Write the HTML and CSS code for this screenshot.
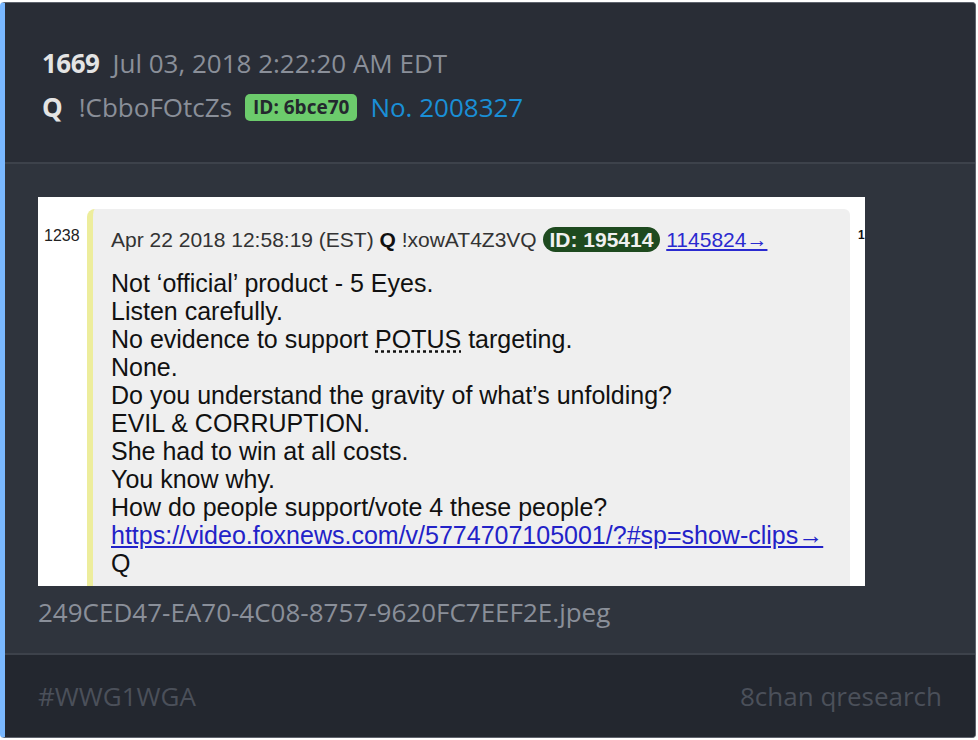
FILE: index.html
```html
<!DOCTYPE html>
<html lang="en">

<head>
    <meta charset="UTF-8">
    <title>Q Drop 1669</title>
    <link rel="stylesheet" href="styles.css">
</head>

<body>
    <div class="card">
        <div class="card-header">
            <div class="meta-line">
                <span class="post-num">1669</span>
                <span class="post-date">Jul 03, 2018 2:22:20 AM EDT</span>
            </div>
            <div class="meta-line">
                <span class="author">Q</span>
                <span class="trip">!CbboFOtcZs</span>
                <span class="id-badge">ID: 6bce70</span>
                <a class="post-link" href="#">No. 2008327</a>
            </div>
        </div>

        <div class="card-body">
            <div class="shot">
                <div class="shot-num">1238</div>
                <div class="shot-post">
                    <div class="shot-head">
                        Apr 22 2018 12:58:19 (EST) <b>Q</b> !xowAT4Z3VQ
                        <span class="shot-id">ID: 195414</span>
                        <span class="shot-ref">1145824→</span>
                    </div>
                    <div class="shot-text">
                        Not ‘official’ product - 5 Eyes.<br>
                        Listen carefully.<br>
                        No evidence to support <span class="abbr">POTUS</span> targeting.<br>
                        None.<br>
                        Do you understand the gravity of what’s unfolding?<br>
                        EVIL &amp; CORRUPTION.<br>
                        She had to win at all costs.<br>
                        You know why.<br>
                        How do people support/vote 4 these people?<br>
                        <span class="shot-link">https://video.foxnews.com/v/5774707105001/?#sp=show-clips→</span><br>
                        Q
                    </div>
                </div>
                <div class="shot-edge">1</div>
            </div>
            <div class="caption">249CED47-EA70-4C08-8757-9620FC7EEF2E.jpeg</div>
        </div>

        <div class="card-footer">
            <span>#WWG1WGA</span>
            <span>8chan qresearch</span>
        </div>
    </div>
</body>

</html>
```

FILE: styles.css
```css
body {
    margin: 0;
    background-color: #ffffff;
    font-family: "Open Sans", sans-serif;
}

.card {
    margin: 2px 2px 0 0;
    height: 736px;
    box-sizing: border-box;
    border: 1px solid #5f646e;
    border-left: 5px solid #7ab8ff;
    border-radius: 4px;
    overflow: hidden;
    display: flex;
    flex-direction: column;
    background-color: #2f343d;
}

.card-header {
    background-color: #292d36;
    padding: 38px 36px 33px 37px;
    border-bottom: 2px solid #3d424b;
}

.meta-line {
    display: flex;
    align-items: center;
    gap: 13px;
    font-size: 26px;
    line-height: 44px;
    color: #8a8f99;
}

.post-num,
.author {
    font-weight: bold;
    color: #e4e4e4;
}

.post-num {
    letter-spacing: -0.5px;
}

.author {
    margin-right: 3px;
}

.id-badge {
    background-color: #6ccb6c;
    color: #24282e;
    font-weight: bold;
    font-size: 19px;
    line-height: 27px;
    padding: 0 8px;
    border-radius: 5px;
}

.post-link {
    color: #1a8fd6;
    text-decoration: none;
}

.card-body {
    flex: 1;
    padding: 33px 33px 0 33px;
}

.shot {
    width: 827px;
    height: 389px;
    background-color: #ffffff;
    display: flex;
    overflow: hidden;
    font-family: "Liberation Sans", Arial, sans-serif;
    color: #111111;
}

.shot-num {
    width: 49px;
    flex-shrink: 0;
    box-sizing: border-box;
    padding: 30px 0 0 6px;
    font-size: 16px;
    color: #222222;
}

.shot-post {
    margin-top: 12px;
    width: 763px;
    flex-shrink: 0;
    background-color: #efefef;
    border-left: 6px solid #eded9c;
    border-top-left-radius: 8px;
    border-top-right-radius: 6px;
    padding: 17px 0 0 18px;
    box-sizing: border-box;
}

.shot-head {
    font-size: 21px;
    color: #333333;
    line-height: 28px;
    white-space: nowrap;
}

.shot-head b {
    color: #111111;
}

.shot-id {
    background-color: #1e4a1f;
    color: #f0f0f0;
    font-weight: bold;
    padding: 1px 7px;
    border-radius: 14px;
}

.shot-ref {
    color: #2a2ad0;
    text-decoration: underline;
}

.shot-text {
    margin-top: 15px;
    font-size: 25px;
    line-height: 28px;
}

.abbr {
    text-decoration: underline dotted;
}

.shot-link {
    color: #2222c8;
    text-decoration: underline;
}

.shot-edge {
    padding: 31px 0 0 8px;
    font-size: 12px;
    font-weight: bold;
}

.caption {
    margin-top: 4px;
    font-size: 26px;
    line-height: 44px;
    color: #8a8f99;
}

.card-footer {
    height: 84px;
    flex-shrink: 0;
    box-sizing: border-box;
    background-color: #23272f;
    border-top: 2px solid #3d424b;
    padding: 0 33px;
    display: flex;
    align-items: center;
    justify-content: space-between;
    font-size: 26px;
    color: #4b505a;
}
```
